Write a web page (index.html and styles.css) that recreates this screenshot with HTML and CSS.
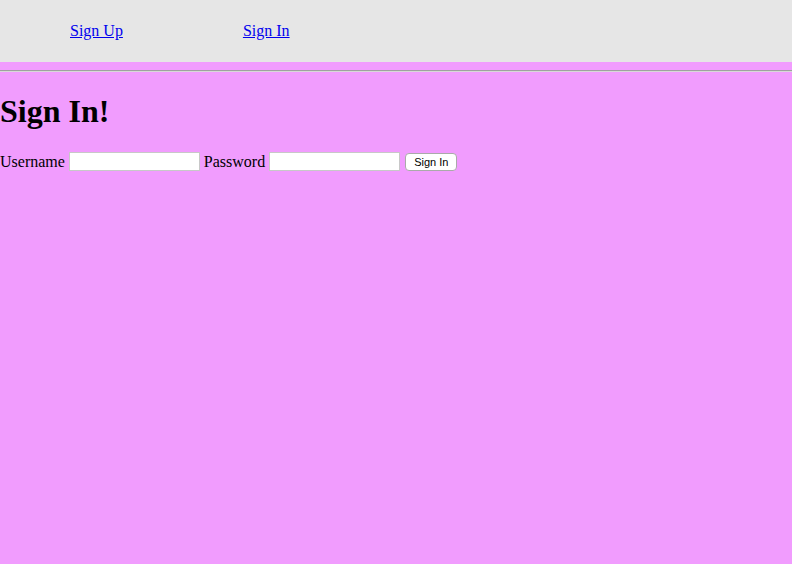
FILE: index.html
```html
<!DOCTYPE html>
<html>
<head>
<meta charset="utf-8">
<link rel="stylesheet" href="styles.css">
</head>
<body>
<nav class="topbar">
  <a class="navlink" href="#">Sign Up</a>
  <a class="navlink" href="#">Sign In</a>
</nav>
<hr class="rule">
<h1 class="title">Sign In!</h1>
<form class="signin">
  <label>Username <input class="field" type="text"></label>
  <label>Password <input class="field" type="password"></label>
  <button class="btn" type="button">Sign In</button>
</form>
</body>
</html>
```
FILE: styles.css
```css
html, body {
  margin: 0;
  background: #f19cfe;
  font-family: "Liberation Serif", "Times New Roman", serif;
  font-size: 16px;
  color: #000;
}
.topbar {
  display: flex;
  align-items: center;
  height: 62px;
  background: #e6e6e6;
  padding-left: 70px;
  gap: 120px;
  box-sizing: border-box;
}
.navlink {
  color: #0000ee;
  text-decoration: underline;
}
.rule {
  margin: 8px 0 0 0;
  border: 0;
  border-top: 1px solid #a0a0a0;
  border-bottom: 1px solid #d8d8d8;
  height: 0;
}
.title {
  font-size: 32px;
  font-weight: bold;
  margin: 21px 0 22px 0;
  line-height: 37px;
}
.signin {
  margin: 0;
  line-height: 19px;
}
.field {
  width: 131px;
  height: 19px;
  box-sizing: border-box;
  border: 1px solid #c8c8c8;
  background: #fff;
  padding: 1px 2px;
  margin: 0;
  vertical-align: bottom;
  font-size: 13px;
}
.btn {
  font-family: "Liberation Sans", Arial, sans-serif;
  font-size: 11px;
  height: 18px;
  padding: 0 8px;
  background: #fff;
  border: 1px solid #aaa;
  border-radius: 4px;
  margin-left: 1px;
  vertical-align: bottom;
}
```
